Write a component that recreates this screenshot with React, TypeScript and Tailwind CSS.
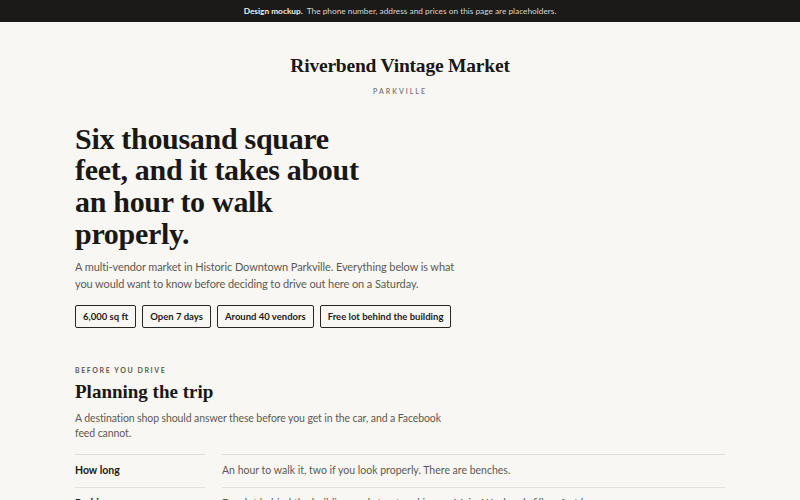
const serif = { fontFamily: '"Liberation Serif", "DejaVu Serif", serif' };

const chips = ["6,000 sq ft", "Open 7 days", "Around 40 vendors", "Free lot behind the building"];

const rows = [
  { label: "How long", value: "An hour to walk it, two if you look properly. There are benches." },
  { label: "Parking", value: "Free lot behind the building, and street parking on Main. Weekends fill up fast by noon." },
  { label: "Hours", value: "Open seven days a week, ten to six. Sundays open at noon." },
];

export default function App() {
  return (
    <div className="min-h-screen bg-[#f8f7f4] text-[#1a1815] font-['Lato','Noto_Sans',sans-serif]">
      <div className="h-[22px] bg-[#1c1a18] flex items-center justify-center text-[8.3px] text-[#d9d4ca]">
        <span className="font-bold text-[#efebe3] mr-1">Design mockup.</span>
        The phone number, address and prices on this page are placeholders.
      </div>

      <header className="pt-[33px] flex flex-col items-center">
        <h1 style={serif} className="text-[19.5px] font-bold leading-[22px] tracking-[-0.2px]">
          Riverbend Vintage Market
        </h1>
        <div className="mt-[9px] text-[7px] tracking-[2px] text-[#77726a] font-semibold">PARKVILLE</div>
      </header>

      <main className="max-w-[650px] mx-auto">
        <section className="pt-[26px]">
          <h2 style={serif} className="max-w-[300px] text-[30px] font-bold leading-[31.7px] tracking-[-0.3px]">
            Six thousand square feet, and it takes about an hour to walk properly.
          </h2>
          <p className="mt-[9px] max-w-[395px] text-[11px] leading-[17px] tracking-[-0.1px] text-[#5d5953]">
            A multi-vendor market in Historic Downtown Parkville. Everything below is what you would want to know before deciding to drive out here on a Saturday.
          </p>
          <div className="mt-[13px] flex gap-[6px]">
            {chips.map((c) => (
              <span
                key={c}
                className="h-[23px] px-[7px] flex items-center border border-[#2a2722] rounded-[2px] text-[9.5px] font-bold text-[#1f1c18]"
              >
                {c}
              </span>
            ))}
          </div>
        </section>

        <section className="pt-[37px]">
          <div className="text-[7px] tracking-[1.6px] font-bold text-[#5d5953]">BEFORE YOU DRIVE</div>
          <h3 style={serif} className="mt-[5px] text-[19px] font-bold leading-[22px]">
            Planning the trip
          </h3>
          <p className="mt-[8px] max-w-[372px] text-[10.5px] leading-[15px] tracking-[-0.1px] text-[#5d5953]">
            A destination shop should answer these before you get in the car, and a Facebook feed cannot.
          </p>
          <div className="mt-[13px] grid grid-cols-[130px_1fr] gap-x-[17px]">
            {rows.map((r) => (
              <div key={r.label} className="contents">
                <div className="border-t border-[#e3e0da] h-[33px] flex items-center text-[10.5px] font-bold">
                  {r.label}
                </div>
                <div className="border-t border-[#e3e0da] h-[33px] flex items-center text-[10.5px] text-[#5d5953]">
                  {r.value}
                </div>
              </div>
            ))}
          </div>
        </section>
      </main>
    </div>
  );
}
